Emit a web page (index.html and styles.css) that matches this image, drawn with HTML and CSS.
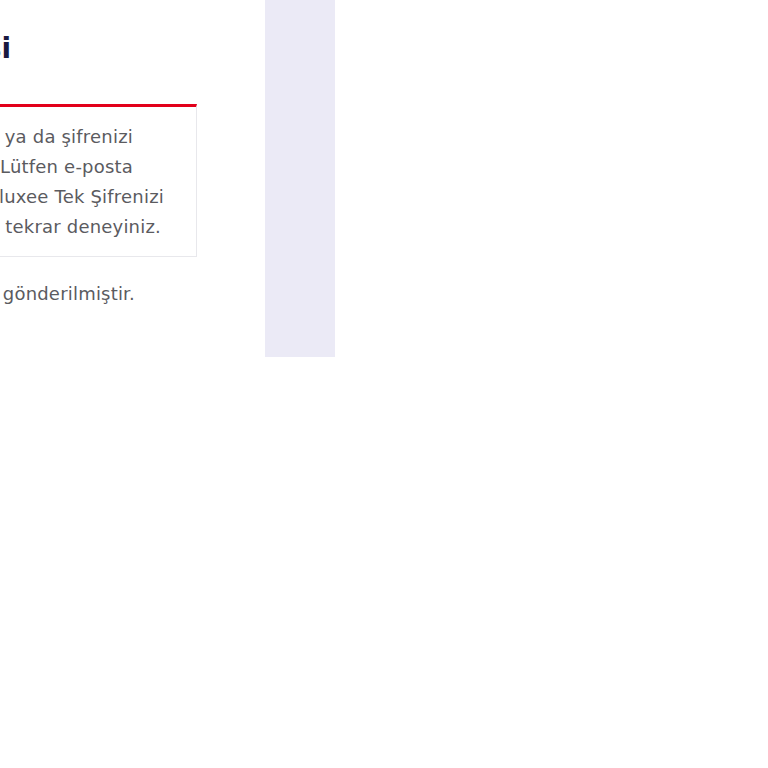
FILE: index.html
```html
<!DOCTYPE html>
<html lang="tr">
<head>
<meta charset="utf-8">
<title>Giriş</title>
<link rel="stylesheet" href="styles.css">
</head>
<body>
<div class="page">
  <div class="viewport">
    <div class="content">
      <h1 class="title">Pluxee Hesap Bilgisi</h1>
      <div class="alert">
        <div class="line l1">E-posta adresinizi ya da şifrenizi</div>
        <div class="line l2">hatalı girdiniz. Lütfen e-posta</div>
        <div class="line l3">adresinizi ve Pluxee Tek Şifrenizi</div>
        <div class="line l4">kontrol ederek tekrar deneyiniz.</div>
      </div>
      <p class="note">Şifre yenileme bağlantısı e-posta adresinize gönderilmiştir.</p>
    </div>
  </div>
  <aside class="side"></aside>
</div>
</body>
</html>
```
FILE: styles.css
```css
html, body {
  margin: 0;
  padding: 0;
  background: #ffffff;
}
.page {
  display: flex;
  align-items: flex-start;
}
.viewport {
  width: 265px;
  height: 357px;
  overflow: hidden;
  display: flex;
  justify-content: flex-end;
  flex-shrink: 0;
}
.content {
  flex-shrink: 0;
  width: 640px;
  padding-right: 68px;
  padding-top: 31px;
  font-family: "DejaVu Sans", "Noto Sans", sans-serif;
  text-align: right;
}
.title {
  margin: 0;
  font-size: 28px;
  line-height: 36px;
  font-weight: 700;
  color: #1a1a40;
  padding-right: 186px;
  white-space: nowrap;
}
.alert {
  margin-top: 37px;
  border-top: 3px solid #e2001a;
  border-left: 1px solid #e8e8ec;
  border-right: 1px solid #e8e8ec;
  border-bottom: 1px solid #e8e8ec;
  padding: 15px 0 14px 0;
}
.line {
  font-size: 18px;
  line-height: 30px;
  color: #5b5b5f;
  white-space: nowrap;
  letter-spacing: 0.2px;
}
.l1 { padding-right: 63px; }
.l2 { padding-right: 63px; }
.l3 { padding-right: 32px; }
.l4 { padding-right: 35px; }
.note {
  margin: 22px 0 0 0;
  font-size: 18px;
  line-height: 30px;
  color: #5b5b5f;
  white-space: nowrap;
  padding-right: 62px;
  letter-spacing: 0.2px;
}
.side {
  width: 70px;
  height: 357px;
  background: #ebeaf6;
  flex-shrink: 0;
}
```
